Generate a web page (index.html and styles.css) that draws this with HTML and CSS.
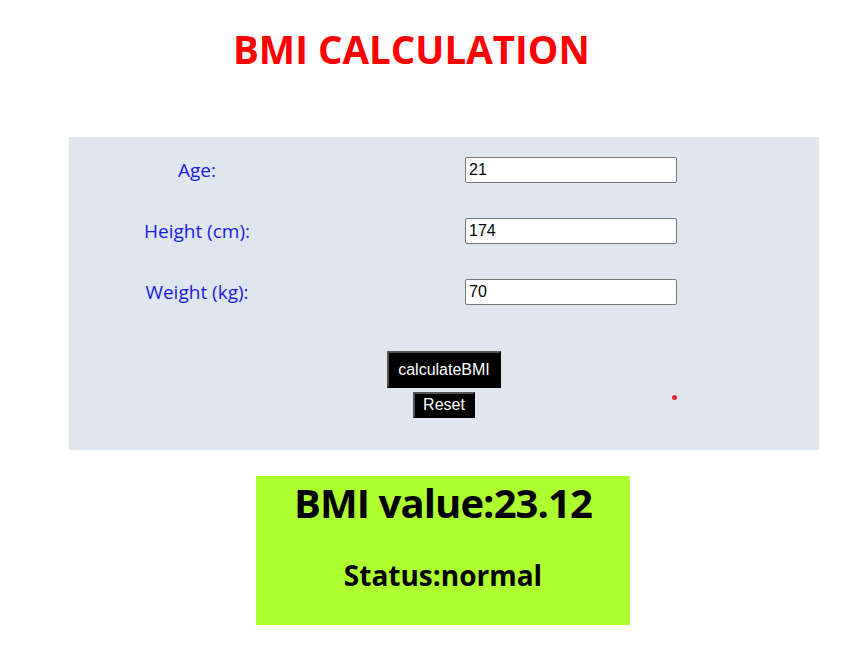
FILE: index.html
```html
<!DOCTYPE html>
<html>
<head>
<meta charset="utf-8">
<link rel="stylesheet" href="styles.css">
</head>
<body>
<h1 class="title">BMI CALCULATION</h1>
<div class="panel">
  <div class="form">
    <label class="label">Age:</label>
    <div class="field"><input class="input" type="text" value="21"></div>
    <label class="label">Height (cm):</label>
    <div class="field"><input class="input" type="text" value="174"></div>
    <label class="label">Weight (kg):</label>
    <div class="field"><input class="input" type="text" value="70"></div>
  </div>
  <div class="actions">
    <button class="btn btn-calc">calculateBMI</button>
    <button class="btn btn-reset">Reset</button>
  </div>
  <span class="dot"></span>
</div>
<div class="result">
  <div class="value">BMI value:23.12</div>
  <div class="status">Status:normal</div>
</div>
</body>
</html>
```
FILE: styles.css
```css
html, body {
  margin: 0;
  padding: 0;
  background: #ffffff;
}
body {
  font-family: "Open Sans", "Noto Sans", sans-serif;
}
.title {
  margin: 0;
  padding: 24px 0 0 233px;
  height: 137px;
  box-sizing: border-box;
  font-size: 38.5px;
  line-height: 50px;
  font-weight: 700;
  color: #ff0000;
}
.panel {
  position: relative;
  margin-left: 69px;
  width: 750px;
  height: 313px;
  box-sizing: border-box;
  background: #e0e6f0;
  padding-top: 20px;
}
.form {
  display: grid;
  grid-template-columns: 256px 1fr;
  column-gap: 140px;
  row-gap: 35px;
}
.label {
  display: flex;
  align-items: center;
  justify-content: center;
  height: 26px;
  font-size: 19px;
  color: #1a1ae0;
}
.field {
  display: flex;
  align-items: center;
}
.input {
  width: 212px;
  height: 26px;
  box-sizing: border-box;
  border: 1px solid #767676;
  border-radius: 2px;
  padding: 1px 3px;
  font-family: "Liberation Sans", Arial, sans-serif;
  font-size: 16px;
  color: #000;
  background: #fff;
}
.actions {
  margin-top: 46px;
  display: flex;
  flex-direction: column;
  align-items: center;
  gap: 4px;
}
.btn {
  background: #000;
  color: #fff;
  font-family: "Liberation Sans", Arial, sans-serif;
  font-size: 16px;
  line-height: 18px;
  border: 2px outset #767676;
  border-color: #555 #222 #222 #555;
  margin: 0;
}
.btn-calc {
  padding: 7px 9px;
  height: 37px;
}
.btn-reset {
  padding: 2px 8px;
  height: 26px;
}
.dot {
  position: absolute;
  left: 603px;
  top: 258px;
  width: 5px;
  height: 5px;
  border-radius: 50%;
  background: #e0282f;
}
.result {
  margin: 26px 0 0 256px;
  width: 374px;
  height: 149px;
  box-sizing: border-box;
  background: #adff2f;
  text-align: center;
  color: #000;
  font-weight: 700;
  padding-top: 2px;
}
.value {
  font-size: 40px;
  line-height: 50px;
  letter-spacing: -0.9px;
}
.status {
  margin-top: 28px;
  font-size: 28px;
  line-height: 38px;
}
```
